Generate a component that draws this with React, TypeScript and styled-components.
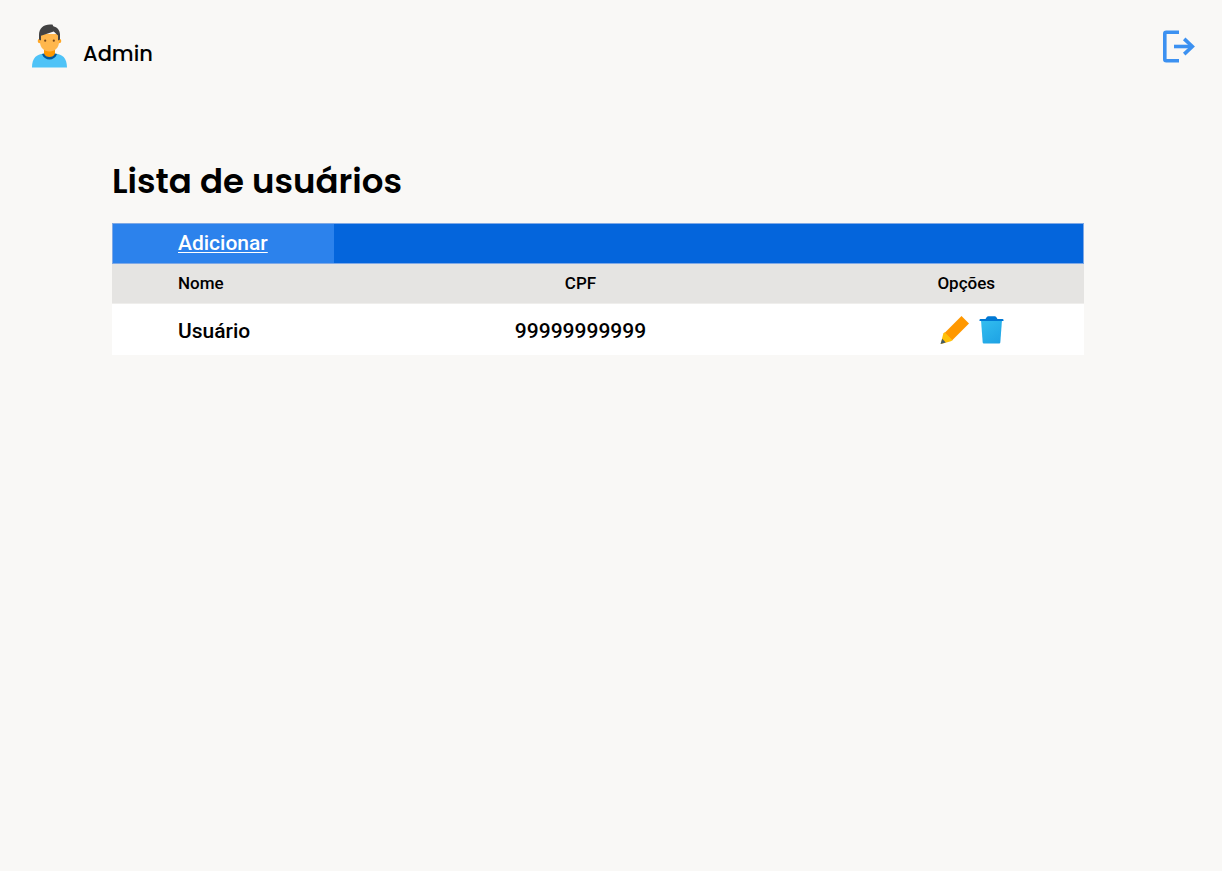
import React from 'react';
import styled, { createGlobalStyle } from 'styled-components';

const GlobalStyle = createGlobalStyle`
  *, *::before, *::after { box-sizing: border-box; }
  body {
    margin: 0;
    background: #f9f8f6;
    color: #000;
    font-family: Roboto, 'Liberation Sans', sans-serif;
  }
`;

const Header = styled.header`
  display: flex;
  justify-content: space-between;
  align-items: flex-start;
  padding: 24px 26px 0 31px;
`;

const Profile = styled.div`
  display: flex;
  gap: 16px;
`;

const ProfileName = styled.span`
  padding-top: 14px;
  font-family: Poppins, Inter, sans-serif;
  font-size: 21px;
  line-height: 32px;
  font-weight: 500;
`;

const IconButton = styled.button<{ $top?: number }>`
  display: flex;
  padding: 0;
  border: 0;
  background: none;
  cursor: pointer;
  margin-top: ${({ $top = 0 }) => $top}px;
`;

const Main = styled.main`
  padding: 84px 138px 40px 112px;
`;

const Title = styled.h1`
  margin: 0 0 15px;
  font-family: Poppins, Inter, sans-serif;
  font-size: 34px;
  line-height: 54px;
  font-weight: 600;
`;

const Toolbar = styled.div`
  display: flex;
  height: 41px;
  border: 1px solid #7fa9e6;
  background: #0465dc;
`;

const AddLink = styled.a`
  width: 22.8%;
  padding-left: 65px;
  background: #2c82ec;
  color: #fff;
  font-size: 21px;
  line-height: 39px;
  font-weight: 500;
  text-decoration: underline;
  text-decoration-thickness: 1px;
  text-underline-offset: 2px;
`;

const Table = styled.table`
  width: 100%;
  table-layout: fixed;
  border-collapse: collapse;
`;

const HeadCell = styled.th<{ $width: string; $align?: string; $indent?: number }>`
  width: ${({ $width }) => $width};
  height: 39px;
  padding: 0 0 0 ${({ $indent = 0 }) => $indent}px;
  border-bottom: 1px solid #efeeec;
  background: #e5e4e2;
  font-size: 17px;
  line-height: 20px;
  font-weight: 500;
  text-align: ${({ $align = 'left' }) => $align};
`;

const Cell = styled.td<{ $align?: string; $indent?: number }>`
  height: 52px;
  padding: 4px 0 0 ${({ $indent = 0 }) => $indent}px;
  background: #fff;
  font-size: 21px;
  line-height: 24px;
  font-weight: 500;
  text-align: ${({ $align = 'left' }) => $align};
`;

const Actions = styled.div`
  display: flex;
  gap: 10px;
  padding-bottom: 3px;
`;

const UserIcon = () => (
  <svg width="36" height="44" viewBox="0 0 36 44" aria-hidden="true">
    <path d="M13 24h11v9l-5.500 4L13 33z" fill="#ff9800" />
    <path d="M1 43.500C1 34 6 30 12.500 29.800c2.500 3.600 9.500 3.600 12 0C31 30 36 34 36 43.500z" fill="#4fc3f7" />
    <path d="M13 24h11v6c-1.500 4.500-9.500 4.500-11 0z" fill="#ff9800" />
    <path d="M11 30l2-.5c1.500 4.700 9.500 4.700 11 0l2 .5c-2.300 7.300-12.700 7.300-15 0z" fill="#01579b" />
    <circle cx="9" cy="17" r="2.300" fill="#ffa726" />
    <circle cx="28" cy="17" r="2.300" fill="#ffa726" />
    <path d="M9 10h19v8c0 5.500-4 9.500-9.500 9.500S9 23.500 9 18z" fill="#ffb74d" />
    <path d="M8 15.500V11C8 4.500 12.500.500 19 .500h2.500L22.300 2.200C26 3 29 6 29 10.500v5l-2 1V11.500l-4.300-4.100L10 11.800v4.700z" fill="#424242" />
    <circle cx="14.200" cy="16.700" r="1.100" fill="#784719" />
    <circle cx="22.800" cy="16.700" r="1.100" fill="#784719" />
  </svg>
);

const LogoutIcon = () => (
  <svg width="34" height="34" viewBox="0 0 34 34" fill="none" stroke="#3c91f1" strokeWidth="3.600" aria-hidden="true">
    <path d="M17 2.300H4.300Q2.800 2.300 2.800 3.800V29.200Q2.800 30.700 4.300 30.700H17" />
    <path d="M12 16.500H30" />
    <path d="M22.200 8.900L30.300 16.500L22.200 24.100" />
  </svg>
);

const PencilIcon = () => (
  <svg width="29" height="28" viewBox="0 0 29 28" aria-hidden="true">
    <path d="M21.500 0L29 7.500L12 24.500L4.500 17z" fill="#ff9800" />
    <path d="M3.300 17.500L4.500 16.300L12.500 24.300L10.800 25.300L1.200 28L.800 27.500z" fill="#ffc107" />
    <path d="M2.200 22.800L5.700 26.400L.500 28z" fill="#455a64" />
  </svg>
);

const TrashIcon = () => (
  <svg width="25" height="28" viewBox="0 0 25 28" aria-hidden="true">
    <defs>
      <linearGradient id="bin" x1="4" y1="4" x2="20" y2="28" gradientUnits="userSpaceOnUse">
        <stop offset="0" stopColor="#32bdef" />
        <stop offset="1" stopColor="#1ea2e4" />
      </linearGradient>
    </defs>
    <path d="M2 4H23L21.300 26.500Q21.200 27.500 20.200 27.500H4.800Q3.800 27.500 3.700 26.500z" fill="url(#bin)" />
    <path d="M6.500 3L7.800 1Q8.300.300 9.300.300H15.700Q16.700.300 17.200 1L18.500 3H23.500Q24.500 3 24.500 4V5H.500V4Q.500 3 1.500 3z" fill="#0078d4" />
  </svg>
);

const users = [{ name: 'Usuário', cpf: '99999999999' }];

export default function App() {
  return (
    <>
      <GlobalStyle />
      <Header>
        <Profile>
          <UserIcon />
          <ProfileName>Admin</ProfileName>
        </Profile>
        <IconButton type="button" aria-label="Sair" $top={6}>
          <LogoutIcon />
        </IconButton>
      </Header>
      <Main>
        <Title>Lista de usuários</Title>
        <Toolbar>
          <AddLink href="#adicionar">Adicionar</AddLink>
        </Toolbar>
        <Table>
          <thead>
            <tr>
              <HeadCell scope="col" $width="22.8%" $indent={66}>Nome</HeadCell>
              <HeadCell scope="col" $width="50.8%" $align="center">CPF</HeadCell>
              <HeadCell scope="col" $width="26.4%" $indent={110}>Opções</HeadCell>
            </tr>
          </thead>
          <tbody>
            {users.map((user) => (
              <tr key={user.cpf}>
                <Cell $indent={66}>{user.name}</Cell>
                <Cell $align="center">{user.cpf}</Cell>
                <Cell $indent={113}>
                  <Actions>
                    <IconButton type="button" aria-label={`Editar ${user.name}`}>
                      <PencilIcon />
                    </IconButton>
                    <IconButton type="button" aria-label={`Excluir ${user.name}`}>
                      <TrashIcon />
                    </IconButton>
                  </Actions>
                </Cell>
              </tr>
            ))}
          </tbody>
        </Table>
      </Main>
    </>
  );
}
